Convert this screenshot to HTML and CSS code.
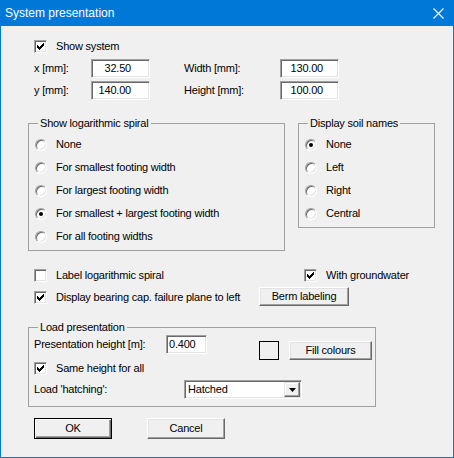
FILE: index.html
```html
<!DOCTYPE html>
<html>
<head>
<meta charset="utf-8">
<link rel="stylesheet" href="styles.css">
</head>
<body>
<div class="window">
  <div class="titlebar">
    <span class="title">System presentation</span>
    <svg class="close" width="11" height="11" viewBox="0 0 11 11"><path d="M0.5 0.5L10.5 10.5M10.5 0.5L0.5 10.5" stroke="#fff" stroke-width="1.1" fill="none"/></svg>
  </div>
  <div class="content">
    <div class="check indent first-check">
      <span class="cb"><svg width="11" height="11" viewBox="0 0 11 11" shape-rendering="crispEdges"><g transform="translate(2 2)" fill="#000"><rect x="6" y="0" width="1" height="1"/><rect x="5" y="1" width="2" height="1"/><rect x="0" y="2" width="1" height="1"/><rect x="4" y="2" width="3" height="1"/><rect x="0" y="3" width="2" height="1"/><rect x="3" y="3" width="3" height="1"/><rect x="0" y="4" width="5" height="1"/><rect x="1" y="5" width="3" height="1"/><rect x="2" y="6" width="1" height="1"/></g></svg></span>
      <span>Show system</span>
    </div>
    <div class="dims indent">
      <span class="lbl">x [mm]:</span><span class="field f1">32.50</span>
      <span class="lbl">Width [mm]:</span><span class="field f2">130.00</span>
      <span class="lbl">y [mm]:</span><span class="field f1">140.00</span>
      <span class="lbl">Height [mm]:</span><span class="field f2">100.00</span>
    </div>
    <div class="groups">
      <fieldset class="group spiral">
        <legend>Show logarithmic spiral</legend>
        <div class="opt"><span class="radio"></span><span>None</span></div>
        <div class="opt"><span class="radio"></span><span>For smallest footing width</span></div>
        <div class="opt"><span class="radio"></span><span>For largest footing width</span></div>
        <div class="opt"><span class="radio on"></span><span>For smallest + largest footing width</span></div>
        <div class="opt"><span class="radio"></span><span>For all footing widths</span></div>
      </fieldset>
      <fieldset class="group soil">
        <legend>Display soil names</legend>
        <div class="opt"><span class="radio on"></span><span>None</span></div>
        <div class="opt"><span class="radio"></span><span>Left</span></div>
        <div class="opt"><span class="radio"></span><span>Right</span></div>
        <div class="opt"><span class="radio"></span><span>Central</span></div>
      </fieldset>
    </div>
    <div class="opts indent">
      <div class="check"><span class="cb"></span><span>Label logarithmic spiral</span></div>
      <div class="check gw"><span class="cb"><svg width="11" height="11" viewBox="0 0 11 11" shape-rendering="crispEdges"><g transform="translate(2 2)" fill="#000"><rect x="6" y="0" width="1" height="1"/><rect x="5" y="1" width="2" height="1"/><rect x="0" y="2" width="1" height="1"/><rect x="4" y="2" width="3" height="1"/><rect x="0" y="3" width="2" height="1"/><rect x="3" y="3" width="3" height="1"/><rect x="0" y="4" width="5" height="1"/><rect x="1" y="5" width="3" height="1"/><rect x="2" y="6" width="1" height="1"/></g></svg></span><span>With groundwater</span></div>
      <div class="check bearing"><span class="cb"><svg width="11" height="11" viewBox="0 0 11 11" shape-rendering="crispEdges"><g transform="translate(2 2)" fill="#000"><rect x="6" y="0" width="1" height="1"/><rect x="5" y="1" width="2" height="1"/><rect x="0" y="2" width="1" height="1"/><rect x="4" y="2" width="3" height="1"/><rect x="0" y="3" width="2" height="1"/><rect x="3" y="3" width="3" height="1"/><rect x="0" y="4" width="5" height="1"/><rect x="1" y="5" width="3" height="1"/><rect x="2" y="6" width="1" height="1"/></g></svg></span><span>Display bearing cap. failure plane to left</span></div>
      <div class="btn berm">Berm labeling</div>
    </div>
    <fieldset class="group load">
      <legend>Load presentation</legend>
      <div class="loadgrid">
        <span class="lbl19 ph">Presentation height [m]:</span>
        <span class="field f3">0.400</span>
        <span class="swatch"></span>
        <div class="btn fill">Fill colours</div>
        <div class="check same"><span class="cb"><svg width="11" height="11" viewBox="0 0 11 11" shape-rendering="crispEdges"><g transform="translate(2 2)" fill="#000"><rect x="6" y="0" width="1" height="1"/><rect x="5" y="1" width="2" height="1"/><rect x="0" y="2" width="1" height="1"/><rect x="4" y="2" width="3" height="1"/><rect x="0" y="3" width="2" height="1"/><rect x="3" y="3" width="3" height="1"/><rect x="0" y="4" width="5" height="1"/><rect x="1" y="5" width="3" height="1"/><rect x="2" y="6" width="1" height="1"/></g></svg></span><span>Same height for all</span></div>
        <span class="lbl19 hl">Load 'hatching':</span>
        <div class="select"><span class="sel-text">Hatched</span><span class="arrow"><svg width="7" height="4" viewBox="0 0 7 4"><polygon points="0,0 7,0 3.5,4" fill="#000"/></svg></span></div>
      </div>
    </fieldset>
    <div class="buttons indent">
      <div class="btn ok">OK</div>
      <div class="btn cancel">Cancel</div>
    </div>
  </div>
</div>
</body>
</html>
```

FILE: styles.css
```css
html, body {
  margin: 0;
  padding: 0;
  background: #f0f0f0;
}

.window {
  width: 454px;
  height: 458px;
  box-sizing: border-box;
  border: 1px solid #0078d7;
  border-top: 0;
  background: #f0f0f0;
  font-family: "Liberation Sans", Arial, sans-serif;
  font-size: 11px;
  letter-spacing: -0.2px;
  line-height: 13px;
  color: #000;
  overflow: hidden;
}

.titlebar {
  height: 26px;
  background: #0078d7;
  color: #fff;
  display: flex;
  align-items: center;
  padding-left: 4px;
  font-size: 12px;
  letter-spacing: 0;
}

.close {
  margin-left: auto;
  margin-right: 9px;
}

.content {
  padding-left: 27px;
}

.indent {
  margin-left: 6px;
}

.check {
  display: flex;
  align-items: center;
  height: 13px;
  white-space: nowrap;
}

.first-check {
  margin-top: 14px;
}

.cb {
  width: 13px;
  height: 13px;
  box-sizing: border-box;
  flex: none;
  margin-right: 9px;
  background: #fff;
  border: 1px solid;
  border-color: #a0a0a0 #fff #fff #a0a0a0;
  box-shadow: inset 1px 1px 0 #696969, inset -1px -1px 0 #e3e3e3;
}

.cb svg {
  display: block;
}

.dims {
  display: grid;
  grid-template-columns: 57px 93px 96px 59px;
  grid-template-rows: 19px 19px;
  row-gap: 3px;
  margin-top: 6px;
  align-items: center;
}

.field {
  height: 19px;
  box-sizing: border-box;
  background: #fff;
  border: 1px solid;
  border-color: #a0a0a0 #fff #fff #a0a0a0;
  box-shadow: inset 1px 1px 0 #696969, inset -1px -1px 0 #e3e3e3;
  line-height: 17px;
  white-space: nowrap;
}

.f1 {
  width: 59px;
  text-align: right;
  padding-right: 18px;
}

.f2 {
  width: 59px;
  text-align: right;
  padding-right: 15px;
}

.f3 {
  width: 41px;
  padding-left: 2px;
}

.groups {
  display: flex;
  align-items: flex-start;
  margin-top: 16px;
}

.group {
  margin: 0;
  padding: 0;
  border: 1px solid #a0a0a0;
  box-sizing: border-box;
  min-width: 0;
}

.group legend {
  padding: 0 2px;
  margin-left: 9px;
  line-height: 14px;
  height: 14px;
  white-space: nowrap;
}

.spiral {
  width: 257px;
  padding: 3px 0 2px 0;
}

.soil {
  width: 137px;
  margin-left: 13px;
  padding: 3px 0 2px 0;
}

.opt {
  display: flex;
  align-items: center;
  height: 23px;
  padding-left: 6px;
  white-space: nowrap;
}

.radio {
  width: 12px;
  height: 12px;
  box-sizing: border-box;
  flex: none;
  margin-right: 9px;
  border-radius: 50%;
  background: #fff;
  border: 1px solid;
  border-color: #a0a0a0 #fff #fff #a0a0a0;
  box-shadow: inset 1px 1px 0 #696969, inset -1px -1px 0 #e3e3e3;
  display: flex;
  align-items: center;
  justify-content: center;
}

.radio.on::after {
  content: "";
  width: 4px;
  height: 4px;
  border-radius: 50%;
  background: #000;
}

.opts {
  display: grid;
  grid-template-columns: 225px 45px 1fr;
  grid-template-rows: 13px 19px;
  row-gap: 5px;
  margin-top: 18px;
}

.gw {
  grid-column: 3;
}

.bearing {
  grid-column: 1;
  align-self: center;
  margin-top: 2px;
}

.btn {
  height: 19px;
  box-sizing: border-box;
  background: #f0f0f0;
  border: 1px solid;
  border-color: #fff #696969 #696969 #fff;
  box-shadow: inset -1px -1px 0 #a0a0a0, inset 1px 1px 0 #e3e3e3;
  display: flex;
  align-items: center;
  justify-content: center;
  white-space: nowrap;
}

.berm {
  grid-column: 2 / 4;
  width: 90px;
}

.load {
  width: 348px;
  margin-top: 14px;
  padding: 1px 0 7px 0;
}

.loadgrid {
  display: grid;
  grid-template-columns: 132px 93px 30px 83px;
  grid-template-rows: 19px 21px 24px;
  margin-left: 5px;
}

.lbl19 {
  height: 19px;
  line-height: 19px;
  white-space: nowrap;
}

.ph {
  grid-column: 1;
  grid-row: 1;
}

.f3 {
  grid-column: 2;
  grid-row: 1;
}

.swatch {
  grid-column: 3;
  grid-row: 1 / 3;
  align-self: start;
  margin-top: 6px;
  width: 20px;
  height: 19px;
  box-sizing: border-box;
  border: 1px solid #000;
}

.fill {
  grid-column: 4;
  grid-row: 1 / 3;
  align-self: start;
  margin-top: 6px;
  width: 83px;
}

.same {
  grid-column: 1 / 3;
  grid-row: 2;
  align-self: end;
}

.hl {
  grid-column: 1;
  grid-row: 3;
  align-self: end;
}

.select {
  grid-column: 2 / 5;
  grid-row: 3;
  align-self: end;
  margin-left: 18px;
  width: 118px;
  height: 19px;
  box-sizing: border-box;
  background: #fff;
  border: 1px solid;
  border-color: #a0a0a0 #fff #fff #a0a0a0;
  box-shadow: inset 1px 1px 0 #696969, inset -1px -1px 0 #e3e3e3;
  display: flex;
  align-items: center;
  padding: 1px 1px 1px 3px;
}

.sel-text {
  flex: 1;
  line-height: 15px;
}

.arrow {
  width: 16px;
  height: 15px;
  box-sizing: border-box;
  background: #f0f0f0;
  border: 1px solid;
  border-color: #e3e3e3 #696969 #696969 #e3e3e3;
  box-shadow: inset -1px -1px 0 #a0a0a0, inset 1px 1px 0 #fff;
  display: flex;
  align-items: center;
  justify-content: center;
}

.arrow svg {
  display: block;
}

.buttons {
  display: flex;
  margin-top: 11px;
}

.buttons .btn {
  width: 78px;
  height: 21px;
}

.ok {
  border: 1px solid #000 !important;
  box-shadow: inset 1px 1px 0 #fff, inset -1px -1px 0 #696969, inset -2px -2px 0 #a0a0a0;
}

.cancel {
  margin-left: 35px;
}
```
